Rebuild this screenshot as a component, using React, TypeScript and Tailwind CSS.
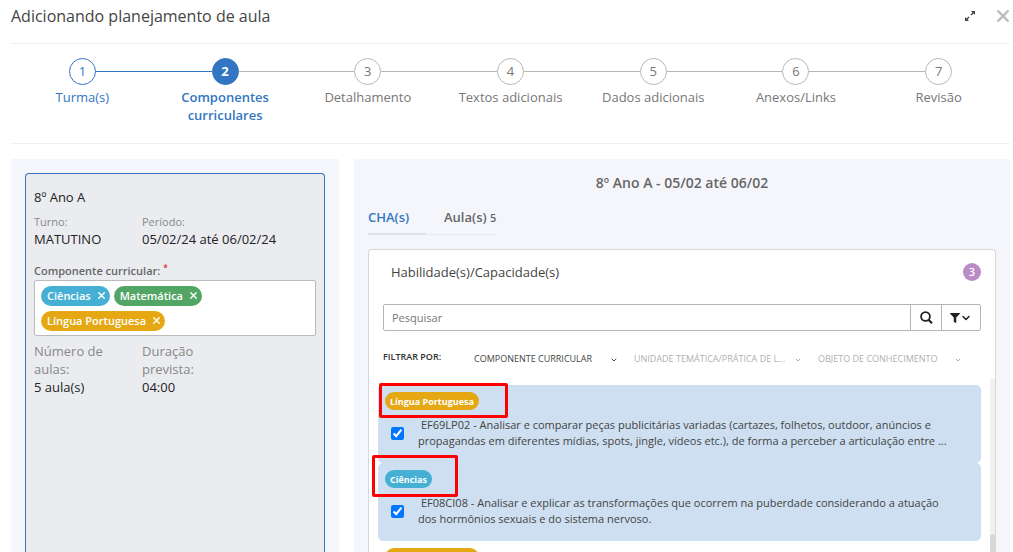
import React from 'react';
import { ChevronDown, X } from 'lucide-react';
import { FaFilter } from 'react-icons/fa';

type Subject = 'ciencias' | 'matematica' | 'portugues';

const subjects: Record<Subject, { label: string; bg: string }> = {
  ciencias: { label: 'Ciências', bg: 'bg-[#46afd4]' },
  matematica: { label: 'Matemática', bg: 'bg-[#52a565]' },
  portugues: { label: 'Língua Portuguesa', bg: 'bg-[#e5a812]' }
};

const steps = [
  'Turma(s)',
  'Componentes curriculares',
  'Detalhamento',
  'Textos adicionais',
  'Dados adicionais',
  'Anexos/Links',
  'Revisão'
];

const filters = [
  { id: 'componente', label: 'COMPONENTE CURRICULAR', width: 'w-36', color: 'text-[#444]' },
  { id: 'unidade', label: 'UNIDADE TEMÁTICA/PRÁTICA DE L...', width: 'w-42', color: 'text-[#b0b0b0]' },
  { id: 'objeto', label: 'OBJETO DE CONHECIMENTO', width: 'w-36', color: 'text-[#b0b0b0]' }
];

interface Skill {
  id: string;
  subject: Subject;
  lines: string[];
  checked: boolean;
  highlight?: string;
}

const skills: Skill[] = [
  {
    id: 'EF69LP02',
    subject: 'portugues',
    lines: [
      'EF69LP02 - Analisar e comparar peças publicitárias variadas (cartazes, folhetos, outdoor, anúncios e',
      'propagandas em diferentes mídias, spots, jingle, vídeos etc.), de forma a perceber a articulação entre ...'
    ],
    checked: true,
    highlight: 'left-px -top-0.5 w-[129px] h-[35px]'
  },
  {
    id: 'EF08CI08',
    subject: 'ciencias',
    lines: [
      'EF08CI08 - Analisar e explicar as transformações que ocorrem na puberdade considerando a atuação',
      'dos hormônios sexuais e do sistema nervoso.'
    ],
    checked: true,
    highlight: '-left-1.5 -top-2 w-[86px] h-[42px]'
  },
  { id: 'outra', subject: 'portugues', lines: [], checked: false }
];

const Stepper: React.FC<{ current: number }> = ({ current }) => (
  <ol className="flex border-b border-[#f1f1f1] h-[100px] pt-3.5">
    {steps.map((label, index) => {
      const done = index < current;
      const active = index === current;
      const line = (filled: boolean) => (filled ? 'bg-[#3276c3]' : 'bg-[#b5b7b5]');
      return (
        <li
          key={label}
          className={`flex-1 min-w-0 flex flex-col items-center text-center text-[13px] leading-[18px] ${
            active ? 'font-semibold text-[#3276c3]' : done ? 'text-[#3276c3]' : 'text-[#777]'
          }`}
        >
          <div className="flex items-center w-full">
            <span className={`flex-1 h-px ${index === 0 ? '' : line(index <= current)}`} />
            <span
              className={`flex items-center justify-center size-[27px] pb-0.5 rounded-full border ${
                active
                  ? 'bg-[#3276c3] border-[#3276c3] text-white font-bold'
                  : done
                    ? 'border-[#3276c3]'
                    : 'border-[#b5b7b5]'
              }`}
            >
              {index + 1}
            </span>
            <span className={`flex-1 h-px ${index === steps.length - 1 ? '' : line(index < current)}`} />
          </div>
          <span className="mt-[3px] px-4">{label}</span>
        </li>
      );
    })}
  </ol>
);

const Tag: React.FC<{ subject: Subject }> = ({ subject }) => (
  <span
    className={`inline-flex items-center h-5 pb-px rounded-full pl-1.5 pr-[3px] gap-[5px] text-[11px] font-semibold text-white ${subjects[subject].bg}`}
  >
    {subjects[subject].label}
    <button type="button" aria-label={`Remover ${subjects[subject].label}`}>
      <X className="size-[11px]" strokeWidth={3} />
    </button>
  </span>
);

const ClassCard = () => (
  <section className="flex-1 rounded-t border border-b-0 border-[#3276c3] bg-[#ebecf0] px-2 pt-3.5 text-[13px] leading-[18px] text-[#222]">
    <h2>8º Ano A</h2>
    <div className="flex mt-2">
      <div className="w-[108px]">
        <p className="text-[11px] leading-4 text-[#888]">Turno:</p>
        <p>MATUTINO</p>
      </div>
      <div>
        <p className="text-[11px] leading-4 text-[#888]">Período:</p>
        <p>05/02/24 até 06/02/24</p>
      </div>
    </div>
    <p className="mt-3.5 text-[11px] leading-[18px] font-semibold text-[#666]">
      Componente curricular: <sup className="text-[#d9232e]">*</sup>
    </p>
    <div className="flex flex-wrap gap-x-1 gap-y-[5px] border border-[#bbb] rounded-xs bg-white px-1.5 pt-[5px] pb-1">
      <Tag subject="ciencias" />
      <Tag subject="matematica" />
      <Tag subject="portugues" />
    </div>
    <div className="flex mt-1.5">
      <div className="w-[108px]">
        <p className="w-20 text-[#888]">Número de aulas:</p>
        <p>5 aula(s)</p>
      </div>
      <div>
        <p className="w-14 text-[#888]">Duração prevista:</p>
        <p>04:00</p>
      </div>
    </div>
  </section>
);

const SkillItem: React.FC<{ skill: Skill }> = ({ skill }) => {
  const [checked, setChecked] = React.useState(skill.checked);

  return (
    <li className={`relative h-[78px] shrink-0 rounded-[5px] px-[7px] pt-[7px] ${checked ? 'bg-[#cddff1]' : ''}`}>
      <span
        className={`flex w-fit items-center h-[18px] rounded-full px-[5px] text-[9px] leading-none font-bold text-white ${subjects[skill.subject].bg}`}
      >
        {subjects[skill.subject].label}
      </span>
      {skill.lines.length > 0 && (
        <label className="flex items-center gap-3.5 mt-[7px] pl-1.5 text-[11px] leading-4 font-medium text-[#444]">
          <input
            type="checkbox"
            className="size-[13px] shrink-0"
            checked={checked}
            onChange={() => setChecked(!checked)}
          />
          <span className="indent-[3px] whitespace-nowrap">
            {skill.lines.map((line, index) => (
              <React.Fragment key={line}>
                {index > 0 && <br />}
                {line}
              </React.Fragment>
            ))}
          </span>
        </label>
      )}
      {skill.highlight && (
        <span className={`absolute z-10 border-3 border-[#fe0000] rounded-xs pointer-events-none ${skill.highlight}`} />
      )}
    </li>
  );
};

const SkillsPanel = () => (
  <section className="flex-1 min-h-0 flex flex-col mt-3.5 rounded-t border border-b-0 border-[#d8d8d8] bg-white">
    <div className="flex items-center justify-between pl-[22px] pr-3.5 pt-[13px]">
      <h3 className="text-[13px] leading-[18px] text-[#444]">Habilidade(s)/Capacidade(s)</h3>
      <span className="flex items-center justify-center size-[18px] rounded-full bg-[#b98bc7] text-[11px] font-semibold text-white">
        3
      </span>
    </div>

    <div className="flex h-[27px] mx-3.5 mt-[23px] border border-[#b5b5b5] rounded-xs text-[#222]">
      <input
        type="text"
        aria-label="Pesquisar"
        placeholder="Pesquisar"
        className="flex-1 min-w-0 px-2 pt-0.5 text-[11px] placeholder:text-[#777]"
      />
      <button type="button" aria-label="Buscar" className="flex items-center justify-center w-[31px] border-l border-[#b5b5b5]">
        <svg viewBox="0 0 13 13" className="size-[13px]" fill="none" stroke="currentColor">
          <circle cx="5.5" cy="5.5" r="4.4" strokeWidth="1.8" />
          <path d="M8.5 8.7L12 12.2" strokeWidth="2.2" />
        </svg>
      </button>
      <button type="button" aria-label="Filtros" className="flex items-center justify-center w-[39px] border-l border-[#b5b5b5]">
        <FaFilter className="size-[10px]" />
        <ChevronDown className="size-3" strokeWidth={3} />
      </button>
    </div>

    <div className="flex items-center ml-3.5 mt-[17px] text-[9px] leading-[18px]">
      <span className="w-[91px] pb-1 font-semibold text-[#333]">FILTRAR POR:</span>
      <div className="flex gap-4">
        {filters.map(filter => (
          <div key={filter.id} className={`relative ${filter.width} ${filter.color}`}>
            <select
              aria-label={filter.label}
              defaultValue=""
              className="w-full appearance-none bg-transparent"
            >
              <option value="">{filter.label}</option>
            </select>
            <ChevronDown className="absolute right-0 top-1.5 size-2 pointer-events-none" strokeWidth={3} />
          </div>
        ))}
      </div>
    </div>

    <div className="flex-1 min-h-0 flex mt-2">
      <ul className="flex-1 min-w-0 flex flex-col pl-[9px] pt-[7px] pr-[9px]">
        {skills.map(skill => (
          <SkillItem key={skill.id} skill={skill} />
        ))}
      </ul>
      <div className="w-[5px] rounded-t-full bg-[#f1f1f1] pt-[156px]">
        <div className="h-full rounded-t-full bg-[#d8d8d8]" />
      </div>
    </div>
  </section>
);

const App = () => {
  return (
    <div className="flex flex-col h-screen overflow-hidden bg-white pl-[11px] pr-[3px] font-['Open_Sans',sans-serif]">
      <header className="flex items-center justify-between h-11 pb-3 border-b border-[#f1f1f1]">
        <h1 className="text-base text-[#444]">Adicionando planejamento de aula</h1>
        <div className="flex items-center gap-5">
          <button type="button" aria-label="Expandir" className="text-[#444]">
            <svg viewBox="0 0 12 12" className="size-3" fill="currentColor" stroke="currentColor">
              <path d="M7 1h4v4zM1 7v4h4z" stroke="none" />
              <path d="M9.5 2.5L7 5M5 7L2.5 9.5" strokeWidth="1.4" />
            </svg>
          </button>
          <button type="button" aria-label="Fechar" className="text-[#bbb]">
            <svg viewBox="0 0 14 14" className="size-3.5" fill="none" stroke="currentColor" strokeWidth="2.4">
              <path d="M1.5 1.5l11 11M12.5 1.5l-11 11" />
            </svg>
          </button>
        </div>
      </header>

      <Stepper current={1} />

      <main className="flex-1 min-h-0 flex gap-[15px] mt-[15px]">
        <aside className="flex flex-col w-[328px] shrink-0 bg-[#f5f6fb] px-3.5 pt-3.5">
          <ClassCard />
        </aside>

        <div className="flex-1 min-w-0 flex flex-col bg-[#f5f6fb] px-3.5 pt-3.5">
          <h2 className="text-center text-sm font-semibold text-[#666]">8º Ano A - 05/02 até 06/02</h2>
          <nav className="flex mt-3.5 text-[13px] leading-[18px] font-semibold">
            <a href="#cha" className="w-[58px] h-7 pt-px border-b-2 border-[#e0e1e5] text-[#3276c3]">
              CHA(s)
            </a>
            <a href="#aulas" className="h-7 pt-px pl-[18px] border-b border-[#e8e9ed] text-[#666]">
              Aula(s) <span className="text-[11px]">5</span>
            </a>
          </nav>
          <SkillsPanel />
        </div>
      </main>
    </div>
  );
};

export default App;
